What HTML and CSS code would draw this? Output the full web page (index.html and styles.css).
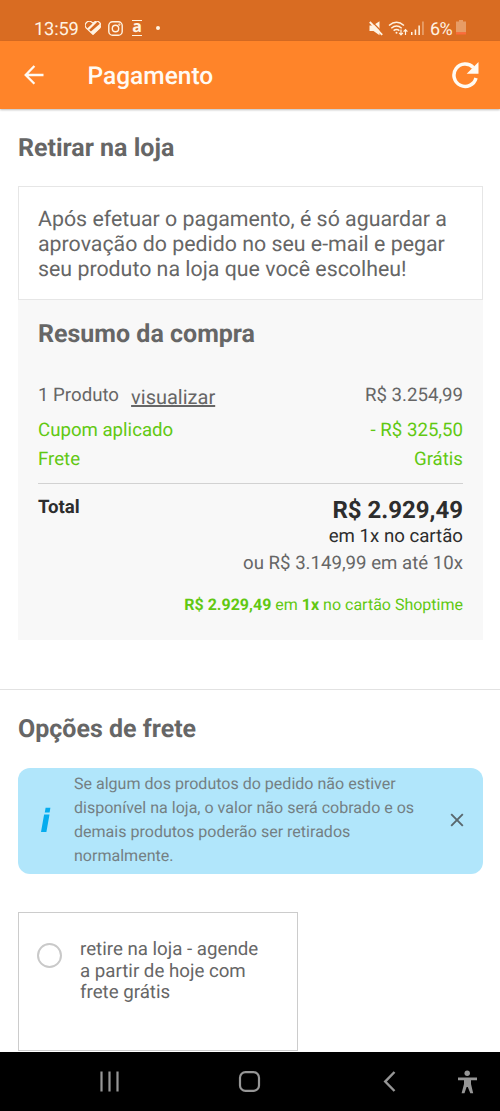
FILE: index.html
```html
<!DOCTYPE html>
<html lang="pt-BR">
<head>
<meta charset="utf-8">
<title>Pagamento</title>
<link rel="stylesheet" href="styles.css">
</head>
<body>
<div class="screen">
  <div class="status">
    <div class="status-left">
      <span class="clock">13:59</span>
      <svg class="heart" width="16" height="14" viewBox="0 0 16 14"><path d="M8 13.400 1.300 7A4 4 0 0 1 7 1.400l1 .9 1-.9A4 4 0 0 1 14.700 7z" fill="none" stroke="#fff3e2" stroke-width="1.200"/><path d="M2.200 7.400 8.400 1.800Q10 .5 12.200.9L4 9zM5.400 10.900 14.900 2.800q1.300 2.400-.2 4.400L8 13.600z" fill="#fff3e2"/></svg>
      <svg class="insta" width="15" height="15" viewBox="0 0 15 15" fill="none" stroke="#fff3e2" stroke-width="1.400"><rect x=".8" y=".8" width="13.400" height="13.400" rx="3.800"/><circle cx="7.500" cy="7.500" r="3.200"/><circle cx="11.400" cy="3.600" r=".4"/></svg>
      <span class="letter">a</span>
      <span class="dot"></span>
    </div>
    <div class="status-right">
      <svg width="14" height="15" viewBox="0 0 14 15"><path d="M.5 4.500h3.500L10.500.3v13.900L4.500 10H.5z" fill="#fff3e2"/><path d="M2.200 0 14 12" stroke="#d96c22" stroke-width="1.400"/><path d="M.8 1 13.200 13.800" stroke="#fff3e2" stroke-width="1.800"/></svg>
      <svg class="wifi" width="20" height="15" viewBox="0 0 20 15" fill="none" stroke="#fff3e2" stroke-width="1.500"><path d="M1 4.500Q8.500-2 16 4.500M3.300 7.200q5.200-4.400 10.400 0M5.600 9.700q2.900-2.300 5.800 0"/><circle cx="8.500" cy="11.700" r="1" fill="#fff3e2" stroke="none"/><path d="M13 8.500v5.200m-1.900-1.900 1.900 2 1.900-2M17.500 14V8.800m-1.900 1.900 1.900-2 1.900 2" stroke-width="1.200"/></svg>
      <svg class="signal" width="13" height="14" viewBox="0 0 13 14" fill="#fff3e2"><path d="M0 11h1.500v3H0zM3.700 8.500h1.500V14H3.700zM7.400 4.500h1.500V14H7.400z"/><path d="M11.200.5h1.500V14h-1.500z" opacity=".45"/></svg>
      <span class="percent">6%</span>
      <svg class="battery" width="10" height="15" viewBox="0 0 10 15"><path d="M3 0h4v1.500h3v11H0v-11h3z" fill="#e79c66"/><path d="M0 12.300h10V14q0 .5-.6.5H.6Q0 14.500 0 14z" fill="#fc6b3b"/></svg>
    </div>
  </div>

  <header class="appbar">
    <svg width="20" height="20" viewBox="0 0 20 20" fill="none" stroke="#fffaf3" stroke-width="2.300"><path d="M19.500 10H2M10.400 1 1.700 10l8.700 8.800"/></svg>
    <h1>Pagamento</h1>
    <svg class="reload" width="27" height="28" viewBox="0 0 27 28"><path d="M24 17A11.200 11.200 0 1 1 21.400 6.600" fill="none" stroke="#fffaf3" stroke-width="3.500"/><path d="M26.500 1v11.700H14.700z" fill="#fffaf3"/></svg>
  </header>

  <main class="content">
    <section class="pickup">
      <h2>Retirar na loja</h2>
      <p class="notice">Após efetuar o pagamento, é só aguardar a<br>aprovação do pedido no seu e-mail e pegar<br>seu produto na loja que você escolheu!</p>
      <div class="summary">
        <h2>Resumo da compra</h2>
        <div class="row first"><span>1 Produto <a class="view">visualizar</a></span><span>R$ 3.254,99</span></div>
        <div class="row coupon"><span>Cupom aplicado</span><span>- R$ 325,50</span></div>
        <div class="row freight"><span>Frete</span><span>Grátis</span></div>
        <div class="total">
          <strong class="total-label">Total</strong>
          <div class="amounts">
            <strong class="price">R$ 2.929,49</strong>
            <span class="cash">em 1x no cartão</span>
            <span class="installments">ou R$ 3.149,99 em até 10x</span>
          </div>
        </div>
        <p class="promo"><b>R$ 2.929,49</b> em <b>1x</b> no cartão Shoptime</p>
      </div>
    </section>
    <section class="shipping">
      <h2>Opções de frete</h2>
      <div class="info">
        <svg class="info-icon" width="10" height="26" viewBox="0 0 10 26" fill="#05acee"><path d="M4.600.8h4.800L8.600 5.400H3.800zM3.100 7.500h5.400L5.400 25H0z"/></svg>
        <p>Se algum dos produtos do pedido não estiver<br>disponível na loja, o valor não será cobrado e os<br>demais produtos poderão ser retirados<br>normalmente.</p>
        <svg class="close" width="14" height="14" viewBox="0 0 14 14" stroke="#59676d" stroke-width="1.900"><path d="m1.200 1.200 11.600 11.600m0-11.600L1.200 12.800"/></svg>
      </div>
      <div class="option">
        <span class="radio"></span>
        <p>retire na loja - agende<br>a partir de hoje com<br>frete grátis</p>
      </div>
    </section>
  </main>

  <nav class="navbar">
    <svg width="500" height="59" viewBox="0 0 500 59" fill="none" stroke="#969696" stroke-width="2.200"><path d="M101.500 19.500v20M109.500 19.500v20M117.500 19.500v20"/><rect x="240" y="20.200" width="19" height="18.700" rx="5.500"/><path d="m394.500 20-9.300 9.600 9.300 9.400" stroke-width="2.400"/><g fill="#969696" stroke="none"><circle cx="467.200" cy="21.200" r="2.700"/><path d="M458 25.500h19v2.700h-6V32l2.200 9.300h-2.900L467.800 35h-1.200l-2.100 6.300h-2.900L464 32v-3.800h-6z"/></g></svg>
  </nav>
</div>
</body>
</html>
```
FILE: styles.css
```css
* { box-sizing: border-box; }
body { margin: 0; background: #fff; font-family: Roboto, sans-serif; color: #666; text-rendering: geometricPrecision; }
h1, h2, p { margin: 0; white-space: nowrap; }
svg { display: block; flex: none; }
.screen { width: 500px; height: 1111px; display: flex; flex-direction: column; overflow: hidden; }

.status { height: 41px; flex: none; background: #d96c22; color: #fff3e2; display: flex; justify-content: space-between; padding: 15px 34px 0 34px; }
.status-left, .status-right { display: flex; align-items: center; height: 26px; }
.clock { font-size: 18.300px; width: 51px; letter-spacing: -.2px; padding-top: 2px; }
.insta { margin-left: 7px; }
.letter { width: 10px; height: 16px; margin-left: 9px; border-top: 1.500px solid; border-bottom: 1.500px solid; font: bold 16px/11px "Open Sans", sans-serif; text-align: center; }
.dot { width: 4px; height: 4px; border-radius: 50%; background: currentColor; margin-left: 14px; }
.wifi { margin-left: 5px; }
.signal { margin-left: 3px; }
.percent { font-size: 18px; margin-left: 6px; width: 26px; letter-spacing: -.5px; padding-top: 2px; }
.battery { margin-bottom: 1px; }

.appbar { height: 67.500px; flex: none; background: #ff8429; color: #fffaf3; display: flex; align-items: center; padding: 0 21px 0 24px; box-shadow: 0 1px 2px #0004; }
.appbar h1 { font-size: 24.500px; font-weight: 500; margin-left: 43.500px; padding-top: 1px; flex: 1; }

.content { flex: 1; }
.pickup { height: 581px; padding: 25.500px 17px 0 18px; border-bottom: 1px solid #e2e2e2; }
h2 { font-size: 25px; line-height: 30px; font-weight: 700; }
.notice { margin-top: 22px; height: 114px; border: 1px solid #e6e6e6; padding: 20px 19px 18px; font-size: 21.350px; line-height: 25px; }
.summary { height: 340px; background: #f8f8f8; padding: 20px 20px 0; }
.row { display: flex; justify-content: space-between; height: 24px; font-size: 18.650px; line-height: 24px; }
.first { margin-top: 33px; }
.view { position: relative; top: 3px; margin-left: 7.500px; font-size: 20px; line-height: 20px; text-decoration: underline; }
.coupon { margin-top: 11px; color: #61c812; }
.freight { margin-top: 5px; color: #61c812; }
.total { display: flex; justify-content: space-between; margin-top: 12px; border-top: 1px solid #d2d2d2; padding-top: 12px; font-size: 18.650px; line-height: 24px; color: #2d2d2d; }
.total-label { font-size: 18.600px; line-height: 23px; }
.amounts { display: flex; flex-direction: column; align-items: flex-end; }
.price { font-size: 24px; line-height: 29px; }
.cash { line-height: 23px; }
.installments { margin-top: 3px; color: #666; }
.promo { margin-top: 20px; font-size: 16px; line-height: 20px; text-align: right; color: #61c812; }

.shipping { padding: 25px 17px 0 18px; }
.info { margin-top: 23px; height: 106px; border-radius: 12px; background: #b1e6fb; display: flex; align-items: center; padding: 0 19px 1px 23px; }
.info p { margin-left: 23px; flex: 1; font-size: 16.050px; line-height: 24px; color: #747f83; }
.option { width: 280px; height: 139px; margin-top: 38.500px; border: 1px solid #ccc; display: flex; padding: 25px 18px; }
.radio { width: 25px; height: 25px; border: 2px solid #c9c9c9; border-radius: 50%; margin-top: 5px; }
.option p { margin-left: 18px; padding-top: 1px; font-size: 18.700px; line-height: 21.700px; }
.navbar { height: 59px; flex: none; background: #000; }
```
